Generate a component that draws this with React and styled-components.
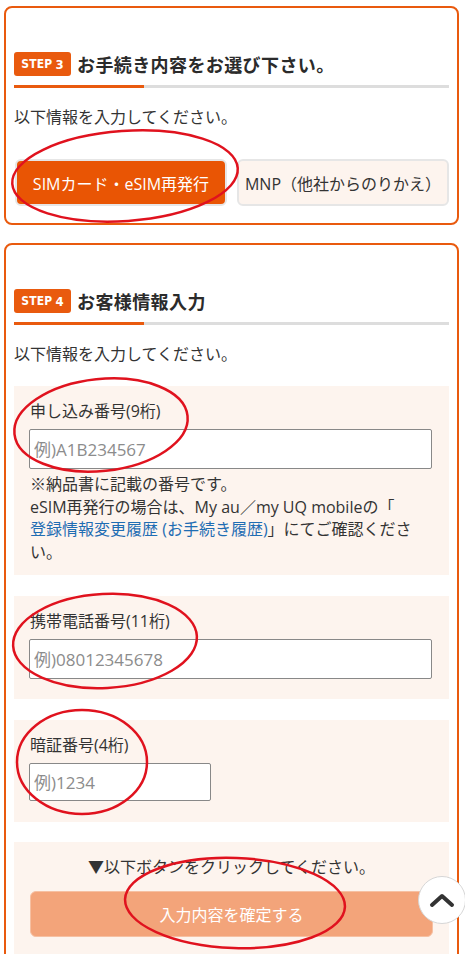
import React from "react";
import styled, { createGlobalStyle } from "styled-components";

const GlobalStyle = createGlobalStyle`
  html, body {
    margin: 0;
    padding: 0;
    background: #fff;
  }
  body {
    font-family: "Open Sans", "Noto Sans CJK JP", sans-serif;
    color: #333;
  }
  * {
    box-sizing: border-box;
  }
`;

const Page = styled.div`
  position: relative;
  width: 465px;
  padding: 6px 6px 0 4px;
  display: flex;
  flex-direction: column;
  gap: 18px;
`;

const Card = styled.section`
  border: 2px solid #e95a0e;
  border-radius: 8px;
  padding: 44px 8px 17px 8px;
`;

const Heading = styled.div`
  display: flex;
  align-items: center;
  gap: 6px;
  height: 24px;
`;

const StepBadge = styled.span`
  display: inline-flex;
  align-items: center;
  justify-content: center;
  width: 57px;
  height: 24px;
  border-radius: 3px;
  background: #e95a0e;
  color: #fff;
  font-family: "DejaVu Sans Condensed", "DejaVu Sans", sans-serif;
  font-weight: bold;
  font-size: 12px;
  letter-spacing: 0.2px;

  b {
    margin-left: 3px;
    font-size: 13px;
  }
`;

const HeadingTitle = styled.h2`
  margin: 0;
  font-family: "Noto Sans CJK JP", sans-serif;
  font-size: 18px;
  font-weight: bold;
  color: #2b2b2b;
  line-height: 24px;
  letter-spacing: 0.4px;
`;

const Rule = styled.div`
  margin-top: 9px;
  height: 3px;
  background: linear-gradient(to right, #e95a0e 0, #e95a0e 130px, #ddd 130px);
`;

const Lead = styled.p`
  margin: ${(p) => p.$top}px 0 0 0;
  font-size: 16px;
  line-height: 22px;
  color: #333;
`;

const ChoiceRow = styled.div`
  display: grid;
  grid-template-columns: 1fr 1fr;
  gap: 10px;
  margin-top: 31px;
  padding-left: 1px;
`;

const Choice = styled.button`
  height: 47px;
  border-radius: 6px;
  border: 2px solid #e6e6e6;
  background: ${(p) => (p.$active ? "#e95504" : "#fdf4ee")};
  color: ${(p) => (p.$active ? "#fff" : "#333")};
  font-family: inherit;
  font-size: 16px;
  padding: 0;
  cursor: pointer;
`;

const FieldBox = styled.div`
  background: #fdf4ee;
  margin-top: ${(p) => p.$top}px;
  padding: 14px 16px ${(p) => p.$bottom}px 16px;
  text-align: ${(p) => (p.$center ? "center" : "left")};
`;

const Label = styled.label`
  display: block;
  font-size: 16px;
  line-height: 22px;
  color: #333;
`;

const Input = styled.input`
  display: block;
  margin-top: 7px;
  width: ${(p) => p.$width || "100%"};
  height: ${(p) => p.$height || 40}px;
  border: 1px solid #888;
  border-radius: 2px;
  background: #fff;
  padding: 0 4px;
  font-family: inherit;
  font-size: 17px;
  margin-left: -1px;

  &::placeholder {
    color: #8c8c8c;
  }
`;

const Note = styled.p`
  margin: 4px 0 0 0;
  font-size: 16px;
  line-height: 22.5px;
  color: #333;

  a {
    color: #1f6db3;
    text-decoration: none;
  }
`;

const Prompt = styled.p`
  margin: 0;
  font-size: 16px;
  line-height: 22px;
  color: #333;
`;

const SubmitButton = styled.button`
  display: block;
  width: 100%;
  height: 46px;
  margin-top: 13px;
  border: 1px solid #f6c0a2;
  border-radius: 6px;
  background: #f3a47a;
  color: #fff;
  font-family: inherit;
  font-size: 16px;
  cursor: pointer;
`;

const ToTop = styled.button`
  position: fixed;
  right: -1px;
  bottom: 30px;
  width: 48px;
  height: 48px;
  border-radius: 50%;
  border: 1px solid #d6d6d6;
  background: #fff;
  display: flex;
  align-items: center;
  justify-content: center;
  padding: 0;
  z-index: 5;
`;

const Marks = styled.svg`
  position: absolute;
  top: 0;
  left: 0;
  pointer-events: none;
  z-index: 10;
`;

function Step({ num, title }) {
  return (
    <>
      <Heading>
        <StepBadge>
          STEP<b>{num}</b>
        </StepBadge>
        <HeadingTitle>{title}</HeadingTitle>
      </Heading>
      <Rule />
    </>
  );
}

export default function App() {
  const marks = [
    { cx: 125, cy: 176, rx: 113, ry: 45, r: -4 },
    { cx: 101, cy: 425, rx: 87, ry: 46, r: -6 },
    { cx: 105, cy: 641, rx: 92, ry: 47, r: -3 },
    { cx: 82, cy: 762, rx: 65, ry: 52, r: 0 },
    { cx: 235, cy: 903, rx: 110, ry: 45, r: 2 },
  ];

  return (
    <>
      <GlobalStyle />
      <Page>
        <Card>
          <Step num="3" title="お手続き内容をお選び下さい。" />
          <Lead $top={18}>以下情報を入力してください。</Lead>
          <ChoiceRow>
            <Choice $active>SIMカード・eSIM再発行</Choice>
            <Choice>MNP（他社からのりかえ）</Choice>
          </ChoiceRow>
        </Card>

        <Card>
          <Step num="4" title="お客様情報入力" />
          <Lead $top={18}>以下情報を入力してください。</Lead>

          <FieldBox $top={21} $bottom={12}>
            <Label>申し込み番号(9桁)</Label>
            <Input placeholder="例)A1B234567" />
            <Note>
              ※納品書に記載の番号です。
              <br />
              eSIM再発行の場合は、My au／my UQ mobileの「
              <br />
              <a href="#">登録情報変更履歴 (お手続き履歴)</a>」にてご確認ください。
            </Note>
          </FieldBox>

          <FieldBox $top={21} $bottom={20}>
            <Label>携帯電話番号(11桁)</Label>
            <Input placeholder="例)08012345678" />
          </FieldBox>

          <FieldBox $top={21} $bottom={21}>
            <Label>暗証番号(4桁)</Label>
            <Input placeholder="例)1234" $width="182px" $height={38} />
          </FieldBox>

          <FieldBox $top={20} $bottom={30} $center>
            <Prompt>▼以下ボタンをクリックしてください。</Prompt>
            <SubmitButton>入力内容を確定する</SubmitButton>
          </FieldBox>
        </Card>

        <Marks width="465" height="954" viewBox="0 0 465 954">
          {marks.map((m, i) => (
            <ellipse
              key={i}
              cx={m.cx}
              cy={m.cy}
              rx={m.rx}
              ry={m.ry}
              fill="none"
              stroke="#e0121e"
              strokeWidth="2.5"
              transform={`rotate(${m.r} ${m.cx} ${m.cy})`}
            />
          ))}
        </Marks>
      </Page>

      <ToTop aria-label="ページトップへ">
        <svg width="26" height="16" viewBox="0 0 26 16">
          <path
            d="M3 13 L13 4 L23 13"
            fill="none"
            stroke="#333"
            strokeWidth="4"
            strokeLinecap="round"
            strokeLinejoin="round"
          />
        </svg>
      </ToTop>
    </>
  );
}
